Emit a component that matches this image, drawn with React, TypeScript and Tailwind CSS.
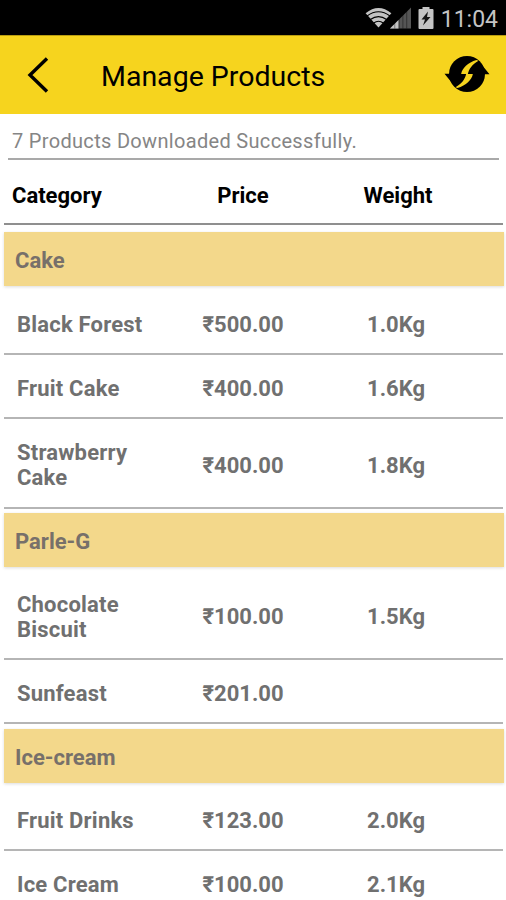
import { clsx } from 'clsx';

type Product = { name: string; price: string; weight?: string; height: string };
type Category = { title: string; height: string; listOffset: string; products: Product[] };

const categories: Category[] = [
  {
    title: 'Cake',
    height: 'h-[281px]',
    listOffset: 'mt-[5px]',
    products: [
      { name: 'Black Forest', price: '₹500.00', weight: '1.0Kg', height: 'h-16' },
      { name: 'Fruit Cake', price: '₹400.00', weight: '1.6Kg', height: 'h-16' },
      { name: 'Strawberry Cake', price: '₹400.00', weight: '1.8Kg', height: 'h-[90px]' },
    ],
  },
  {
    title: 'Parle-G',
    height: 'h-[216px]',
    listOffset: 'mt-1',
    products: [
      { name: 'Chocolate Biscuit', price: '₹100.00', weight: '1.5Kg', height: 'h-[89px]' },
      { name: 'Sunfeast', price: '₹201.00', height: 'h-16' },
    ],
  },
  {
    title: 'Ice-cream',
    height: 'h-[200px]',
    listOffset: 'mt-1',
    products: [
      { name: 'Fruit Drinks', price: '₹123.00', weight: '2.0Kg', height: 'h-16' },
      { name: 'Ice Cream', price: '₹100.00', weight: '2.1Kg', height: 'h-16' },
    ],
  },
];

function App() {
  return (
    <div className="flex h-[900px] w-[506px] flex-col overflow-hidden bg-white font-['Roboto','Noto_Sans',sans-serif]">
      <StatusBar />
      <header className="flex h-[79px] shrink-0 items-center border-t border-[#b99d10] bg-[#f6d41e] text-black">
        <svg className="ml-[26px] h-10 w-6" viewBox="0 0 24 40" fill="none" aria-label="Back">
          <path d="M21 3.5 4 20l17 16.5" stroke="currentColor" strokeWidth="3.4" />
        </svg>
        <h1 className="ml-[51px] pt-[5px] text-[28.5px] leading-none">Manage Products</h1>
        <RefreshIcon />
      </header>
      <p className="mr-[7px] ml-2 flex h-[46px] shrink-0 items-center border-b-2 border-[#a9a9a9] pt-[10px] pl-1 text-xl tracking-[0.32px] text-[#858585]">
        7 Products Downloaded Successfully.
      </p>
      <div className="mr-[3px] ml-1 grid h-[65px] shrink-0 grid-cols-[159px_160px_150px] items-center border-b-2 border-[#8f8f8f] pt-2 text-[22px] font-bold text-black">
        <span className="pl-2">Category</span>
        <span className="text-center">Price</span>
        <span className="text-center">Weight</span>
      </div>
      <main className="flex flex-col pt-[7px]">
        {categories.map((category) => (
          <CategorySection key={category.title} category={category} />
        ))}
      </main>
    </div>
  );
}

function StatusBar() {
  return (
    <div className="flex h-[35px] shrink-0 items-center justify-end bg-black pr-2 text-[#c4c4c4]">
      <svg className="h-[21px] w-[27px]" viewBox="0 0 28 22" aria-label="Wi-Fi">
        <path d="M0.5 6.5Q14-4.5 27.5 6.5L14 21.5z" fill="currentColor" />
        <path d="M2 9.5q12-9 24 0M5.5 13q8.5-6 17 0M9 16.7q5-3.5 10 0" fill="none" stroke="#000" strokeWidth="1.2" />
      </svg>
      <svg className="-ml-[2px] h-[22px] w-[21px]" viewBox="0 0 22 22" aria-label="Signal">
        <path d="M0 22 22 0v22z" fill="#555" />
        <path d="M0 22 9 13v9z" fill="currentColor" />
        <path d="M5 15v7M9.5 11v11M13.5 7v15M17.5 3v19" stroke="#000" strokeWidth=".8" opacity=".5" />
      </svg>
      <svg className="ml-[7px] h-[22px] w-[16px]" viewBox="0 0 16 22" aria-label="Charging">
        <path d="M4.5 0h7v2H14.5q1 0 1 1v18q0 1-1 1h-13q-1 0-1-1V3q0-1 1-1h3z" fill="currentColor" />
        <path d="M10 4.5 3.5 12.5h3.5L5 18.5 12.5 10H9z" fill="#151515" />
      </svg>
      <span className="ml-[7px] pt-[3px] text-[23px] leading-none">11:04</span>
    </div>
  );
}

function RefreshIcon() {
  return (
    <svg className="mr-4 ml-auto h-[38px] w-[46px] -translate-y-px" viewBox="43.5 29 138 114" aria-label="Refresh">
      <circle cx="112.5" cy="86" r="54" />
      <path d="M45 85h52l-17 43zM180 87h-52l17-43z" />
      <path
        d="M141 44C115 52 98 68 95 86H110C106 102 98 114 78 126L84 128C110 120 127 104 130 86H115C119 70 127 58 147 46z"
        fill="#f6d41e"
      />
    </svg>
  );
}

function CategorySection({ category }: { category: Category }) {
  return (
    <section className={clsx('shrink-0', category.height)}>
      <h2 className="mr-[2px] ml-1 flex h-[54px] items-center bg-[#f3d88b] pt-[2px] pl-[11px] text-[22px] font-bold text-[#77706a] shadow-[0_1px_3px_rgba(0,0,0,0.14)]">
        {category.title}
      </h2>
      <ul className={clsx('mr-[3px] ml-1', category.listOffset)}>
        {category.products.map((product) => (
          <li
            key={product.name}
            className={clsx(
              'grid grid-cols-[159px_160px_146px] items-center border-b-2 border-[#b5b5b5] pt-1 text-[22px] leading-[25px] font-bold text-[#707070]',
              product.height,
            )}
          >
            <span className="pr-5 pl-[13px] tracking-[0.2px]">{product.name}</span>
            <span className="text-center">{product.price}</span>
            <span className="text-center">{product.weight}</span>
          </li>
        ))}
      </ul>
    </section>
  );
}

export default App;
